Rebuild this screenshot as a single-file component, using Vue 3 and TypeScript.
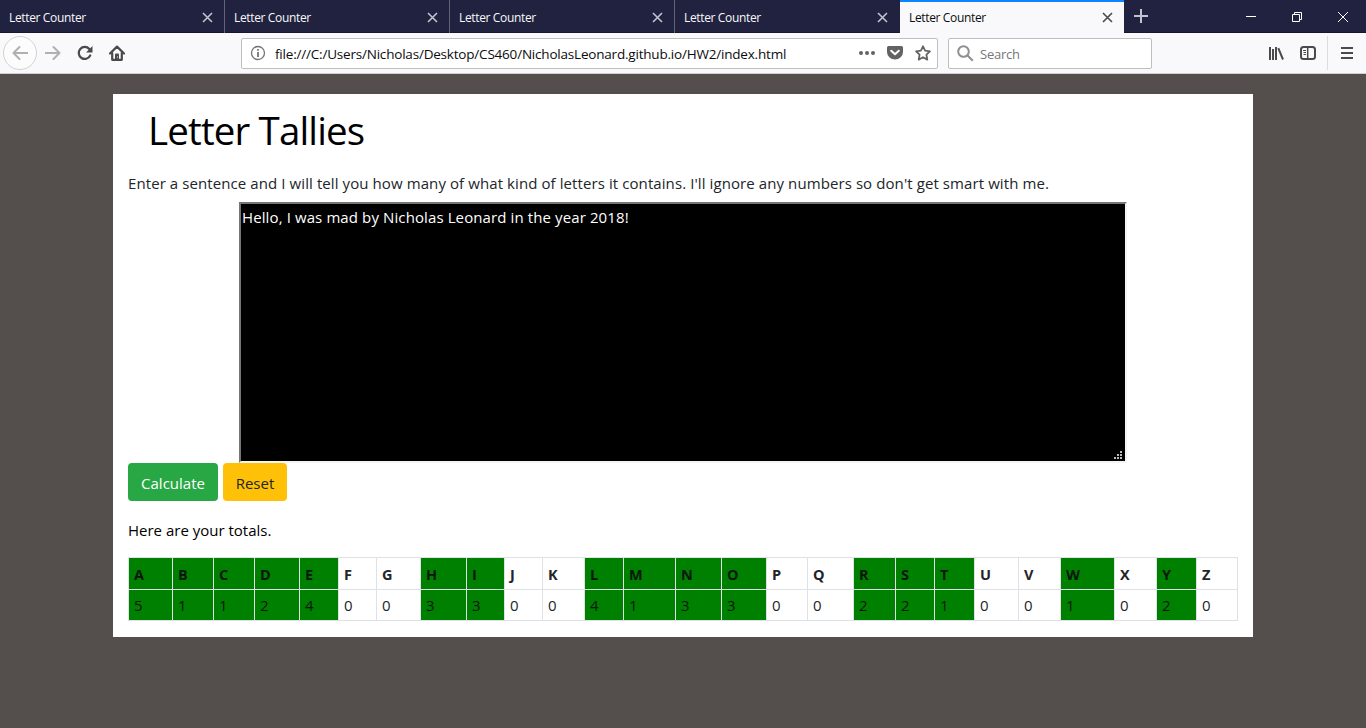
<script setup lang="ts">
import { ref } from 'vue'

interface Tally {
  letter: string
  count: number
  width: number
}

const tabs = [false, false, false, false, true]
const sentence = ref('Hello, I was mad by Nicholas Leonard in the year 2018!')

const counts = [5, 1, 1, 2, 4, 0, 0, 3, 3, 0, 0, 4, 1, 3, 3, 0, 0, 2, 2, 1, 0, 0, 1, 0, 2, 0]
const widths = [44, 41, 41, 45, 39, 38, 44, 46, 38, 38, 42, 39, 52, 46, 45, 41, 46, 42, 39, 40, 44, 42, 54, 42, 40, 41]
const tallies: Tally[] = counts.map((count, i) => ({
  letter: String.fromCharCode(65 + i),
  count,
  width: widths[i],
}))
</script>

<template>
  <div class="window">
    <header class="tabbar">
      <div v-for="(active, i) in tabs" :key="i" class="tab" :class="{ active }">
        <span class="tab-title">Letter Counter</span>
        <svg class="tab-close" width="11" height="11" viewBox="0 0 11 11"><path d="M1 1l9 9M10 1l-9 9" /></svg>
      </div>
      <svg class="new-tab" width="14" height="14" viewBox="0 0 14 14"><path d="M7 0v14M0 7h14" /></svg>
      <div class="controls">
        <svg width="46" height="33" viewBox="0 0 46 33"><path d="M18 16.500h10" /></svg>
        <svg width="46" height="33" viewBox="0 0 46 33"><path d="M18.500 14.500h7v7h-7zM20.500 14.500v-2h7v7h-2" /></svg>
        <svg width="46" height="33" viewBox="0 0 46 33"><path d="M18 12l10 10M28 12l-10 10" /></svg>
      </div>
    </header>

    <nav class="toolbar">
      <div class="back"><svg width="16" height="16" viewBox="0 0 16 16"><path d="M15.500 8H1.500M7.500 2L1.500 8l6 6" /></svg></div>
      <svg class="forward" width="16" height="16" viewBox="0 0 16 16"><path d="M.5 8h14M8.500 2l6 6-6 6" /></svg>
      <svg class="reload" width="16" height="16" viewBox="0 0 16 16">
        <path class="line" d="M13.200 10.500A6 6 0 1 1 12.300 4" />
        <path class="solid" d="M15.500 1v6.500H9z" />
      </svg>
      <svg class="home" width="16" height="16" viewBox="0 0 16 16">
        <path class="line" d="M1 8.500L8 1.600l7 6.900M3.200 8v6.800h9.600V8" />
        <path class="solid" d="M6 15V9.500a1 1 0 0 1 1-1h2a1 1 0 0 1 1 1V15z" />
        <path class="knob" d="M8 11.500h1v1H8z" />
      </svg>
      <div class="urlbar">
        <svg class="info" width="16" height="16" viewBox="0 0 16 16">
          <circle cx="8" cy="8" r="6.500" /><path d="M8 7v5M8 4v1.800" />
        </svg>
        <span class="url">file:///C:/Users/Nicholas/Desktop/CS460/NicholasLeonard.github.io/HW2/index.html</span>
        <svg class="dots" width="16" height="16" viewBox="0 0 16 16">
          <circle cx="2" cy="8" r="2" /><circle cx="8" cy="8" r="2" /><circle cx="14" cy="8" r="2" />
        </svg>
        <svg class="pocket" width="16" height="16" viewBox="0 0 16 16">
          <path class="solid" d="M1.500 1h13A1.500 1.500 0 0 1 16 2.500V7A8 7.500 0 0 1 0 7V2.500A1.500 1.500 0 0 1 1.500 1z" />
          <path class="check" d="M4.200 5.700L8 9.200l3.800-3.500" />
        </svg>
        <svg class="star" width="16" height="16" viewBox="0 0 16 16">
          <path d="M8 1.300l2.100 4.300 4.800.7-3.500 3.300.9 5L8 12.200l-4.300 2.400.9-5L1.100 6.300l4.800-.7z" />
        </svg>
      </div>
      <div class="search">
        <svg width="17" height="17" viewBox="0 0 17 17"><circle cx="6.500" cy="6.500" r="5.300" /><path d="M10.300 10.300l5.500 5.500" /></svg>
        <span>Search</span>
      </div>
      <div class="tools">
        <svg class="library" width="16" height="16" viewBox="0 0 16 16">
          <path d="M2 2v13M5 4v11M8 2v13M10.300 3.200L15 14.500" />
        </svg>
        <svg class="sidebar" width="16" height="16" viewBox="0 0 16 16">
          <rect x="1" y="2" width="14" height="12" rx="2.500" /><path class="split" d="M7.700 2v12" />
          <path class="rows" d="M3 5.500h3M3.500 7.500H6M3.500 9.500H6" />
        </svg>
        <svg class="menu" width="12" height="14" viewBox="0 0 12 14"><path d="M0 2h12M0 7h12M0 12h12" /></svg>
      </div>
    </nav>

    <main class="page">
      <section class="card">
        <h1>Letter Tallies</h1>
        <p class="intro">Enter a sentence and I will tell you how many of what kind of letters it contains. I'll ignore any numbers so don't get smart with me.</p>
        <div class="entry">
          <div class="textarea">
            {{ sentence }}
            <svg class="grip" width="9" height="9" viewBox="0 0 9 9">
              <path d="M6 0h2v2H6zM3 3h2v2H3zM6 3h2v2H6zM0 6h2v2H0zM3 6h2v2H3zM6 6h2v2H6z" />
            </svg>
          </div>
        </div>
        <div class="actions">
          <button class="btn calculate" type="button">Calculate</button>
          <button class="btn reset" type="button">Reset</button>
        </div>
        <p class="totals">Here are your totals.</p>
        <table>
          <colgroup><col v-for="t in tallies" :key="t.letter" :style="{ width: t.width + 'px' }" /></colgroup>
          <tbody>
            <tr class="letters">
              <th v-for="t in tallies" :key="t.letter" :class="{ hit: t.count > 0 }">{{ t.letter }}</th>
            </tr>
            <tr class="counts">
              <td v-for="t in tallies" :key="t.letter" :class="{ hit: t.count > 0 }">{{ t.count }}</td>
            </tr>
          </tbody>
        </table>
      </section>
    </main>
  </div>
</template>

<style>
body { margin: 0; overflow: hidden; }
</style>

<style scoped>
* { box-sizing: border-box; }
svg { display: block; flex: none; fill: none; }
.window {
  width: 1366px; height: 728px; display: flex; flex-direction: column; overflow: hidden;
  background: #544f4d; font-family: "Open Sans", "Noto Sans", sans-serif; color: #212529;
}
.tabbar { height: 33px; flex: none; display: flex; background: #20223f; border-bottom: 1px solid #15172e; }
.tab {
  width: 225px; height: 33px; padding: 2px 11px 0 9px; display: flex; align-items: center;
  justify-content: space-between; border-right: 1px solid #62647a; color: #f9f9fa;
  font-size: 12px; letter-spacing: -0.35px;
}
.tab:nth-child(4) { border-right-color: #20223f; }
.tab-title { white-space: nowrap; }
.tab-close { stroke: #c2c3ce; stroke-width: 1.600; }
.tab.active { background: #f9f9fb; color: #0c0c0d; border-top: 2px solid #0a84ff; border-right: 0; padding-top: 0; width: 224px; }
.active .tab-close { stroke: #4a4a4f; }
.new-tab { margin: 9px 0 0 10px; stroke: #c2c3ce; stroke-width: 2; }
.controls { margin-left: auto; display: flex; }
.controls svg { stroke: #fff; stroke-width: 1; }

.toolbar {
  height: 41px; flex: none; display: flex; align-items: center; background: #f9f9fb;
  border-bottom: 1px solid #d0cfd0;
}
.back {
  width: 34px; height: 34px; margin-left: 3px; border: 1px solid #d2d2d4; border-radius: 50%;
  display: flex; align-items: center; justify-content: center; background: #fcfcfd;
}
.back svg, .forward { stroke: #b0b0b3; stroke-width: 2; stroke-linecap: round; stroke-linejoin: round; }
.forward { margin-left: 8px; }
.reload { margin-left: 16px; }
.home { margin-left: 16px; }
.line { stroke: #4a4a4d; stroke-width: 2.200; stroke-linecap: round; stroke-linejoin: round; }
.solid { fill: #4a4a4d; }
.knob { fill: #f9f9fb; }
.urlbar {
  width: 697px; height: 31px; margin-left: 116px; padding: 0 6px 0 8px; display: flex; align-items: center;
  border: 1px solid #bebec0; border-radius: 2px; background: #fff; color: #0c0c0d;
}
.info { stroke: #737376; stroke-width: 1.300; }
.info path { stroke-width: 1.800; }
.url { margin: 2px 0 0 9px; font-size: 13.500px; white-space: nowrap; letter-spacing: -0.2px; }
.dots { margin-left: auto; fill: #636366; }
.pocket { margin-left: 12px; }
.pocket .solid { fill: #636366; }
.check { stroke: #fff; stroke-width: 2; stroke-linecap: round; stroke-linejoin: round; }
.star { margin-left: 12px; stroke: #636366; stroke-width: 1.800; stroke-linejoin: round; }
.search {
  width: 204px; height: 31px; margin-left: 10px; padding-left: 8px; display: flex; align-items: center;
  border: 1px solid #bebec0; border-radius: 2px; background: #fff; font-size: 13px; letter-spacing: -0.25px; color: #77777a;
}
.search svg { stroke: #8f8f92; stroke-width: 2; }
.search span { margin: 2px 0 0 6px; }
.tools { margin-left: auto; display: flex; align-items: center; height: 100%; }
.library { stroke: #4a4a4d; stroke-width: 2; }
.sidebar { margin: 0 11px 0 16px; stroke: #4a4a4d; stroke-width: 2; }
.sidebar .split { stroke-width: 1.500; }
.sidebar .rows { stroke-width: 1; }
.menu { box-sizing: content-box; padding: 10px 13px; border-left: 1px solid #dcdcde; stroke: #4a4a4d; stroke-width: 2; }

.page { flex: 1; padding-top: 20px; }
.card { width: 1140px; height: 543px; margin: 0 auto; padding: 0 15px; background: #fff; }
h1 {
  margin: 0; padding: 11px 0 0 20px; height: 77px; font-size: 38.500px; line-height: 50px; font-weight: 400;
  letter-spacing: -0.85px; color: #000;
}
p { margin: 0; white-space: nowrap; font-size: 15px; line-height: 24px; }
.intro { height: 31px; letter-spacing: 0.09px; }
.entry { display: flex; justify-content: center; height: 261px; }
.textarea {
  position: relative; width: 888px; height: 261px; padding: 1px 1px; border: 2px solid #767676;
  border-right-color: #f4f4f4; border-bottom-color: #f4f4f4; background: #000; color: #fff;
  font-size: 15px; line-height: 24px; white-space: nowrap; letter-spacing: 0.11px;
}
.grip { position: absolute; right: 2px; bottom: 1px; fill: #bbb; }
.actions { display: flex; gap: 5px; }
.btn { height: 38px; padding: 1px 0 0; border: 0; border-radius: 4px; font: 15px/24px "Open Sans", "Noto Sans", sans-serif; }
.calculate { width: 90px; background: #28a745; color: #fff; }
.reset { width: 64px; background: #ffc107; color: #212529; }
.totals { margin-top: 17px; height: 39px; color: #000; }
table {
  width: 1110px; table-layout: fixed; border-spacing: 0; border-right: 1px solid #dee2e6;
  border-bottom: 1px solid #dee2e6;
}
th, td { padding: 3px 0 0 5px; text-align: left; font-size: 15px; line-height: 24px; border: 0 solid #dee2e6; border-width: 1px 0 0 1px; }
th { height: 32px; font-weight: 700; font-size: 14.500px; }
td { height: 31px; padding: 0 0 1px 5px; }
.hit { background: #008000; background-clip: padding-box; color: #0a170c; }
</style>
